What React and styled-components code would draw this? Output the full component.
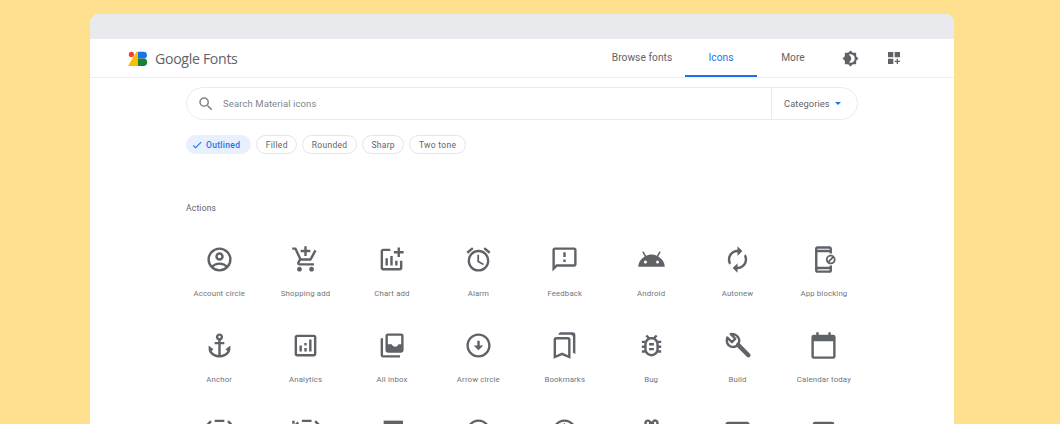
import React from "react";
import styled, { createGlobalStyle } from "styled-components";
import {
  MdOutlineAddShoppingCart,
  MdOutlineAddchart,
  MdOutlineAlarm,
  MdOutlineFeedback,
  MdAndroid,
  MdOutlineAutorenew,
  MdOutlineAppBlocking,
  MdOutlineAnchor,
  MdOutlineAnalytics,
  MdOutlineArrowCircleDown,
  MdOutlineBookmarks,
  MdOutlineBugReport,
  MdOutlineCheckCircle,
  MdOutlineChangeCircle,
  MdOutlineCardGiftcard,
  MdOutlineCreditCard,
  MdOutlineWebAsset,
  MdBrightness4,
  MdDashboardCustomize,
  MdSearch,
  MdCheck,
} from "react-icons/md";

const GlobalStyle = createGlobalStyle`
  html, body {
    margin: 0;
    height: 424px;
    overflow: hidden;
    background: #fee08f;
  }
  * {
    box-sizing: border-box;
  }
`;

const AccountCircle = ({ size }) => (
  <svg width={size} height={size} viewBox="0 0 24 24" fill="none" stroke="currentColor" strokeWidth="2">
    <circle cx="12" cy="12" r="9" />
    <circle cx="12" cy="9.500" r="2.500" />
    <path d="M5.600 18.200C7.400 16.200 9.600 15.400 12 15.400s4.600.8 6.400 2.800" />
  </svg>
);

const AllInbox = ({ size }) => (
  <svg width={size} height={size} viewBox="0 0 24 24" fill="currentColor">
    <path d="M3 6h2v14h14v2H5a2 2 0 0 1-2-2V6z" />
    <path
      fillRule="evenodd"
      d="M9 2h11a2 2 0 0 1 2 2v12a2 2 0 0 1-2 2H9a2 2 0 0 1-2-2V4a2 2 0 0 1 2-2zm0 2v7h3.200c.5 1.300 1.600 2 2.800 2s2.300-.7 2.800-2H20V4H9z"
    />
  </svg>
);

const Build = ({ size }) => (
  <svg width={size} height={size} viewBox="0 0 24 24" fill="none" stroke="currentColor" strokeLinejoin="round">
    <path
      strokeWidth="2"
      d="M3.600 5.400 7.400 9.200 10.200 6.400 6.400 2.600C9.800 2 13.600 4.600 13.400 8.400 13.200 12 9.800 14 6.600 13 3.400 12 2.400 8.400 3.600 5.400z"
    />
    <path strokeWidth="3.600" strokeLinecap="round" d="M12.500 11.500 21 20" />
  </svg>
);

const CalendarToday = ({ size }) => (
  <svg width={size} height={size} viewBox="0 0 24 24" fill="currentColor">
    <path
      fillRule="evenodd"
      d="M6 1h2v2h8V1h2v2h2a2 2 0 0 1 2 2v16a2 2 0 0 1-2 2H4a2 2 0 0 1-2-2V5a2 2 0 0 1 2-2h2V1zM4 8.500V21h16V8.500H4z"
    />
  </svg>
);

const ViewCode = ({ size }) => (
  <svg width={size} height={size} viewBox="0 0 24 24" fill="none" stroke="currentColor" strokeWidth="2">
    <path d="M5 3.500 2.500 6 5 8.500M19 3.500 21.500 6 19 8.500M8 3.200h8" />
  </svg>
);

const ViewDotted = ({ size }) => (
  <svg width={size} height={size} viewBox="0 0 24 24" fill="none" stroke="currentColor" strokeWidth="2">
    <path d="M6 4.500 4 6.500 6 8.500M20 3.500 22.500 6 20 8.500M9 3.200h8M2 3v2.500" />
  </svg>
);

const TopBand = ({ size }) => (
  <svg width={size} height={size} viewBox="0 0 24 24" fill="currentColor">
    <path d="M5.500 3h16v5h-16z" />
  </svg>
);

const icons = [
  [AccountCircle, "Account circle"],
  [MdOutlineAddShoppingCart, "Shopping add"],
  [MdOutlineAddchart, "Chart add"],
  [MdOutlineAlarm, "Alarm"],
  [MdOutlineFeedback, "Feedback"],
  [MdAndroid, "Android"],
  [MdOutlineAutorenew, "Autonew"],
  [MdOutlineAppBlocking, "App blocking"],
  [MdOutlineAnchor, "Anchor"],
  [MdOutlineAnalytics, "Analytics"],
  [AllInbox, "All inbox"],
  [MdOutlineArrowCircleDown, "Arrow circle"],
  [MdOutlineBookmarks, "Bookmarks"],
  [MdOutlineBugReport, "Bug"],
  [Build, "Build"],
  [CalendarToday, "Calendar today"],
  [ViewCode],
  [ViewDotted],
  [TopBand],
  [MdOutlineCheckCircle],
  [MdOutlineChangeCircle],
  [MdOutlineCardGiftcard],
  [MdOutlineCreditCard],
  [MdOutlineWebAsset],
];

const chips = ["Filled", "Rounded", "Sharp", "Two tone"];

const Logo = () => (
  <svg width="20" height="15" viewBox="0 0 20 15">
    <circle cx="3.400" cy="3.400" r="2.600" fill="#ea4335" />
    <path d="M0 15 L8.500 .8 H10 V15 Z" fill="#fbbc04" />
    <path d="M10 .8 H15.500 A3.400 3.400 0 0 1 15.500 7.600 H10 Z" fill="#1a73e8" />
    <path d="M10 15 V7.600 H15.500 A3.700 3.700 0 0 1 15.500 15 Z" fill="#188038" />
  </svg>
);

const App = () => (
  <>
    <GlobalStyle />
    <Page>
      <Window>
        <TitleBar />
        <Header>
          <Brand>
            <Logo />
            <BrandName>Google Fonts</BrandName>
          </Brand>
          <Nav>
            <Tab $width={86}>Browse fonts</Tab>
            <Tab $width={72} $active>
              Icons
            </Tab>
            <Tab $width={72}>More</Tab>
          </Nav>
          <HeaderActions>
            <MdBrightness4 size={17} />
            <MdDashboardCustomize size={16} />
          </HeaderActions>
        </Header>
        <Main>
          <SearchBar>
            <SearchField>
              <MdSearch size={18} />
              <span>Search Material icons</span>
            </SearchField>
            <CategoryButton>
              Categories
              <Caret />
            </CategoryButton>
          </SearchBar>
          <ChipRow>
            <Chip $selected>
              <MdCheck size={12} />
              Outlined
            </Chip>
            {chips.map((chip) => (
              <Chip key={chip}>{chip}</Chip>
            ))}
          </ChipRow>
          <SectionTitle>Actions</SectionTitle>
          <IconGrid>
            {icons.map(([Icon, label], index) => (
              <IconCell key={index}>
                <Icon size={29} />
                {label && <IconLabel>{label}</IconLabel>}
              </IconCell>
            ))}
          </IconGrid>
        </Main>
      </Window>
    </Page>
  </>
);

const Page = styled.div`
  height: 424px;
  padding: 14px 106px 0 90px;
  overflow: hidden;
  font-family: Roboto, "Liberation Sans", sans-serif;
  color: #5f6368;
`;

const Window = styled.div`
  height: 500px;
  background: #fff;
  border-radius: 9px 9px 0 0;
  overflow: hidden;
`;

const TitleBar = styled.div`
  height: 25px;
  background: #e8eaed;
`;

const Header = styled.header`
  height: 39px;
  display: flex;
  align-items: center;
  padding-left: 38px;
  border-bottom: 1px solid #eceef0;
`;

const Brand = styled.div`
  display: flex;
  align-items: center;
  gap: 7px;
`;

const BrandName = styled.span`
  font-family: "Open Sans", sans-serif;
  font-size: 14.1px;
  letter-spacing: -0.3px;
`;

const Nav = styled.nav`
  display: flex;
  align-items: stretch;
  align-self: stretch;
  margin-left: auto;
`;

const Tab = styled.div`
  width: ${(props) => props.$width}px;
  display: flex;
  align-items: center;
  justify-content: center;
  font-size: 10.2px;
  letter-spacing: 0.05px;
  color: ${(props) => (props.$active ? "#1a73e8" : "#5f6368")};
  border-bottom: 2px solid ${(props) => (props.$active ? "#1a73e8" : "transparent")};
`;

const HeaderActions = styled.div`
  display: flex;
  align-items: center;
  gap: 27px;
  margin-left: 13px;
  margin-right: 52px;
`;

const Main = styled.main`
  padding: 9px 96px 0;
`;

const SearchBar = styled.div`
  height: 33px;
  display: flex;
  border: 1px solid #e8eaed;
  border-radius: 17px;
`;

const SearchField = styled.div`
  flex: 1;
  display: flex;
  align-items: center;
  gap: 8px;
  padding-left: 10px;
  font-size: 9.5px;
  letter-spacing: 0.1px;
  color: #80868b;
`;

const CategoryButton = styled.div`
  width: 86px;
  display: flex;
  align-items: center;
  gap: 5px;
  padding-left: 12px;
  border-left: 1px solid #e8eaed;
  font-size: 9.3px;
  letter-spacing: 0.1px;
`;

const Caret = styled.i`
  border-left: 3px solid transparent;
  border-right: 3px solid transparent;
  border-top: 3px solid #1a73e8;
`;

const ChipRow = styled.div`
  display: flex;
  gap: 5px;
  margin-top: 15px;
`;

const Chip = styled.div`
  height: 19px;
  display: flex;
  align-items: center;
  gap: 3px;
  padding: ${(props) => (props.$selected ? "0 10px 0 4px" : "0 8.5px")};
  border: 1px solid ${(props) => (props.$selected ? "#e8f0fe" : "#e3e5e8")};
  border-radius: 10px;
  background: ${(props) => (props.$selected ? "#e8f0fe" : "#fff")};
  color: ${(props) => (props.$selected ? "#1a73e8" : "#5f6368")};
  font-size: 8.5px;
  font-weight: ${(props) => (props.$selected ? 500 : 400)};
  letter-spacing: 0.3px;
`;

const SectionTitle = styled.h2`
  margin: 48px 0 0;
  font-size: 8.5px;
  font-weight: 400;
  line-height: 12px;
  letter-spacing: 0.2px;
`;

const IconGrid = styled.div`
  display: grid;
  grid-template-columns: repeat(8, 86.4px);
  grid-auto-rows: 86.2px;
  margin: 30.5px 0 0 -10px;
`;

const IconCell = styled.div`
  display: flex;
  flex-direction: column;
  align-items: center;
`;

const IconLabel = styled.span`
  margin-top: 15.5px;
  font-size: 7.8px;
  line-height: 10px;
  letter-spacing: 0.15px;
  color: #70757a;
`;

export default App;
